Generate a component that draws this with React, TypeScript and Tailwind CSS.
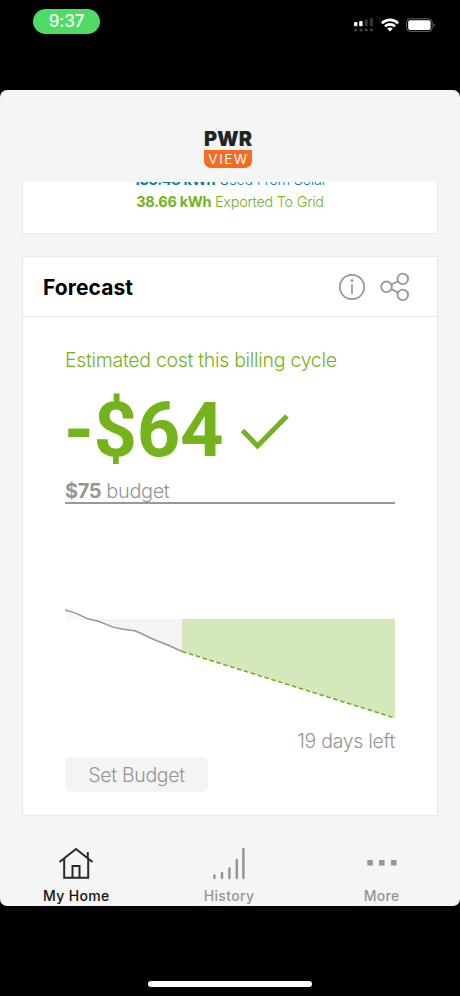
import React from "react";

function StatusBar() {
  return (
    <div className="flex h-[90px] items-start justify-between pl-[33px] pr-[24px] pt-[9px]">
      <div className="flex h-[25px] w-[67px] items-center justify-center rounded-full bg-[#4fdc66] font-['Inter',sans-serif] text-[17px] font-medium leading-none tracking-[-0.2px] text-white">
        9:37
      </div>
      <div className="mt-[9px] flex items-start">
        <svg width="20" height="14" viewBox="0 0 20 14" className="mr-[7px]">
          <rect x="0" y="4" width="3.4" height="4.2" rx="1" fill="#fff" />
          <rect x="5.2" y="3" width="3.4" height="5.2" rx="1" fill="#fff" />
          <rect x="10.6" y="1.5" width="3.2" height="6.7" rx="1" fill="#333" />
          <rect x="15.8" y="0" width="3.2" height="8.2" rx="1" fill="#333" />
          <g fill="#444">
            <circle cx="1.8" cy="12" r="1.6" />
            <circle cx="7" cy="12" r="1.6" />
            <circle cx="12.2" cy="12" r="1.6" />
            <circle cx="17.4" cy="12" r="1.6" />
          </g>
        </svg>
        <svg width="18" height="14" viewBox="0 0 18 14" className="mr-[7px]" fill="none" stroke="#fff" strokeWidth="2.7">
          <path d="M0.9 5.2C5.4 0.8 12.6 0.8 17.1 5.2" />
          <path d="M4 8.4C6.8 5.7 11.2 5.7 14 8.4" />
          <path d="M6.2 10.6C7.8 9.2 10.2 9.2 11.8 10.6L9 13.6Z" fill="#fff" stroke="none" />
        </svg>
        <svg width="30" height="14" viewBox="0 0 30 14">
          <rect x="0.6" y="0.8" width="25.6" height="12.6" rx="3.6" fill="none" stroke="#666" />
          <rect x="2.2" y="2.3" width="22.4" height="9.6" rx="2" fill="#fff" />
          <path d="M27.6 5.2C29.4 5.8 29.4 8.5 27.6 9.1Z" fill="#666" />
        </svg>
      </div>
    </div>
  );
}

function Logo() {
  return (
    <div className="flex h-[92px] shrink-0 flex-col items-center pr-[4px] pt-[39px]">
      <div className="flex h-[20px] items-center justify-center whitespace-nowrap font-['Inter',sans-serif] text-[20px] font-black leading-none tracking-[-0.1px] text-[#1f2724]">
        PWR
      </div>
      <div className="mt-px flex h-[18px] w-[48px] items-center justify-center rounded-b-[7px] bg-[#f76b20] pl-[1px] pt-px font-['Inter',sans-serif] text-[13.5px] font-normal leading-none tracking-[1.5px] text-white">
        VIEW
      </div>
    </div>
  );
}

function Forecast() {
  return (
    <section className="mx-[22px] mt-[22px] h-[560px] border border-[#e9e9e9] bg-white">
      <header className="flex h-[60px] items-center border-b border-[#e9e9e9] pl-[20px] pr-[27px]">
        <h2 className="mt-[2px] font-['Inter',sans-serif] text-[21px] font-bold tracking-[0.1px] text-black">Forecast</h2>
        <svg width="28" height="28" viewBox="0 0 28 28" className="ml-auto mr-[14px]" fill="none" stroke="#969696" strokeWidth="1.7">
          <circle cx="14" cy="14" r="12.2" />
          <path d="M14 11.3V21" />
          <circle cx="14" cy="7.6" r="1.5" fill="#969696" stroke="none" />
        </svg>
        <svg width="30" height="30" viewBox="0 0 30 30" fill="none" stroke="#969696" strokeWidth="1.8">
          <circle cx="6.5" cy="14.8" r="5.3" />
          <circle cx="22.8" cy="6.9" r="5.3" />
          <circle cx="22.8" cy="22.9" r="5.3" />
          <path d="M11.3 12.5L18 9.3M11.3 17.1L18 20.5" />
        </svg>
      </header>
      <div className="flex flex-col px-[42px] font-['Inter',sans-serif]">
        <p className="mt-[30px] h-[26px] whitespace-nowrap text-[19.5px] font-light leading-[26px] tracking-[-0.3px] text-[#75b31c]">
          Estimated cost this billing cycle
        </p>
        <div className="mt-[12px] flex h-[90px] items-center">
          <span className="-ml-px w-[159px] whitespace-nowrap font-['Roboto',sans-serif] text-[76px] font-bold leading-[88px] tracking-[-0.4px] text-[#75b31c]">-$64</span>
          <svg width="50" height="38" viewBox="0 0 50 38" className="ml-[17px] mt-[4px]" fill="none" stroke="#75b31c" strokeWidth="5">
            <path d="M2.5 17.5L17.5 33L47 3" />
          </svg>
        </div>
        <div className="h-[29px] border-b-2 border-[#999] pt-[4px] text-[20px] leading-[24px] tracking-[-0.4px] text-[#969696]">
          <span className="font-bold">$75</span> <span className="font-light">budget</span>
        </div>
        <svg width="330" height="120" viewBox="0 0 330 120" className="mt-[99px]">
          <path d="M0 7L11 10L22 15L33 17.5L0 17.5Z" fill="#f8f8f8" />
          <path d="M23 16L34 19L48 24.5L70 27.5L90 36L117 48.5V16Z" fill="#f4f4f4" />
          <path d="M117 16H330V115L117 48.5Z" fill="#d4e8bb" />
          <path d="M0 7L10 9.8L23 15.8L34 18.5L48 24.2L58 26.3L70 27.8L90 37L104 42.5L117 48.5" fill="none" stroke="#969696" strokeWidth="1.4" />
          <path d="M117 48.5L330 115" fill="none" stroke="#75aa16" strokeWidth="1.5" strokeDasharray="4.5 2.7" />
        </svg>
        <p className="mt-[5px] h-[26px] text-right text-[19.5px] font-light leading-[26px] tracking-[-0.3px] text-[#969696]">19 days left</p>
        <button className="mt-[3px] h-[35px] w-[143px] rounded-[6px] bg-[#f4f4f4] pt-px text-[19.5px] font-light leading-[34px] tracking-[-0.3px] text-[#969696]">
          Set Budget
        </button>
      </div>
    </section>
  );
}

function Tabs() {
  return (
    <nav className="grid grid-cols-3 pr-[2px] pt-[28px] font-['Inter',sans-serif] text-[14px] font-medium leading-[18px] tracking-[0.35px] text-[#969696]">
      <div className="flex flex-col items-center text-[#111]">
        <svg width="36" height="36" viewBox="0 0 36 36" fill="none" stroke="#252d29" strokeWidth="2">
          <path d="M1.5 18L18 5L34.5 18M6.2 15V33.8H30.2V15M29.8 13.5V8M14.5 33.5V22H21.5V33.5" />
        </svg>
        <span className="mt-[7px]">My Home</span>
      </div>
      <div className="flex flex-col items-center">
        <svg width="36" height="36" viewBox="0 0 36 36" fill="none" stroke="#969696" strokeWidth="2.5" strokeLinecap="round">
          <path d="M3.4 31.5V34M11 29V34M18.4 24.5V34M25.8 16V34M32.4 5V34" />
        </svg>
        <span className="mt-[7px]">History</span>
      </div>
      <div className="flex flex-col items-center">
        <svg width="36" height="36" viewBox="0 0 36 36" fill="#969696">
          <rect x="3.3" y="16" width="5.5" height="5.5" />
          <rect x="15" y="16" width="5.5" height="5.5" />
          <rect x="27" y="16" width="5.5" height="5.5" />
        </svg>
        <span className="mt-[7px]">More</span>
      </div>
    </nav>
  );
}

export default function App() {
  return (
    <div className="flex h-[996px] w-[460px] flex-col overflow-hidden bg-black">
      <StatusBar />
      <main className="flex h-[816px] shrink-0 flex-col overflow-hidden rounded-[7px] bg-[#f5f5f5]">
        <Logo />
        <div className="mx-[22px] h-[52px] shrink-0 overflow-hidden border-x border-b border-[#e9e9e9] bg-white text-center font-['Inter',sans-serif] text-[14.5px] font-light leading-[22px] tracking-[-0.3px]">
          <p className="-mt-[13px] whitespace-nowrap text-[#087f9a]">
            <b className="font-bold">133.48 kWh</b> Used From Solar
          </p>
          <p className="whitespace-nowrap text-[#75b31c]">
            <b className="font-bold">38.66 kWh</b> Exported To Grid
          </p>
        </div>
        <Forecast />
        <Tabs />
      </main>
      <div className="mx-auto mt-[75px] h-[6px] w-[164px] rounded-full bg-white" />
    </div>
  );
}
